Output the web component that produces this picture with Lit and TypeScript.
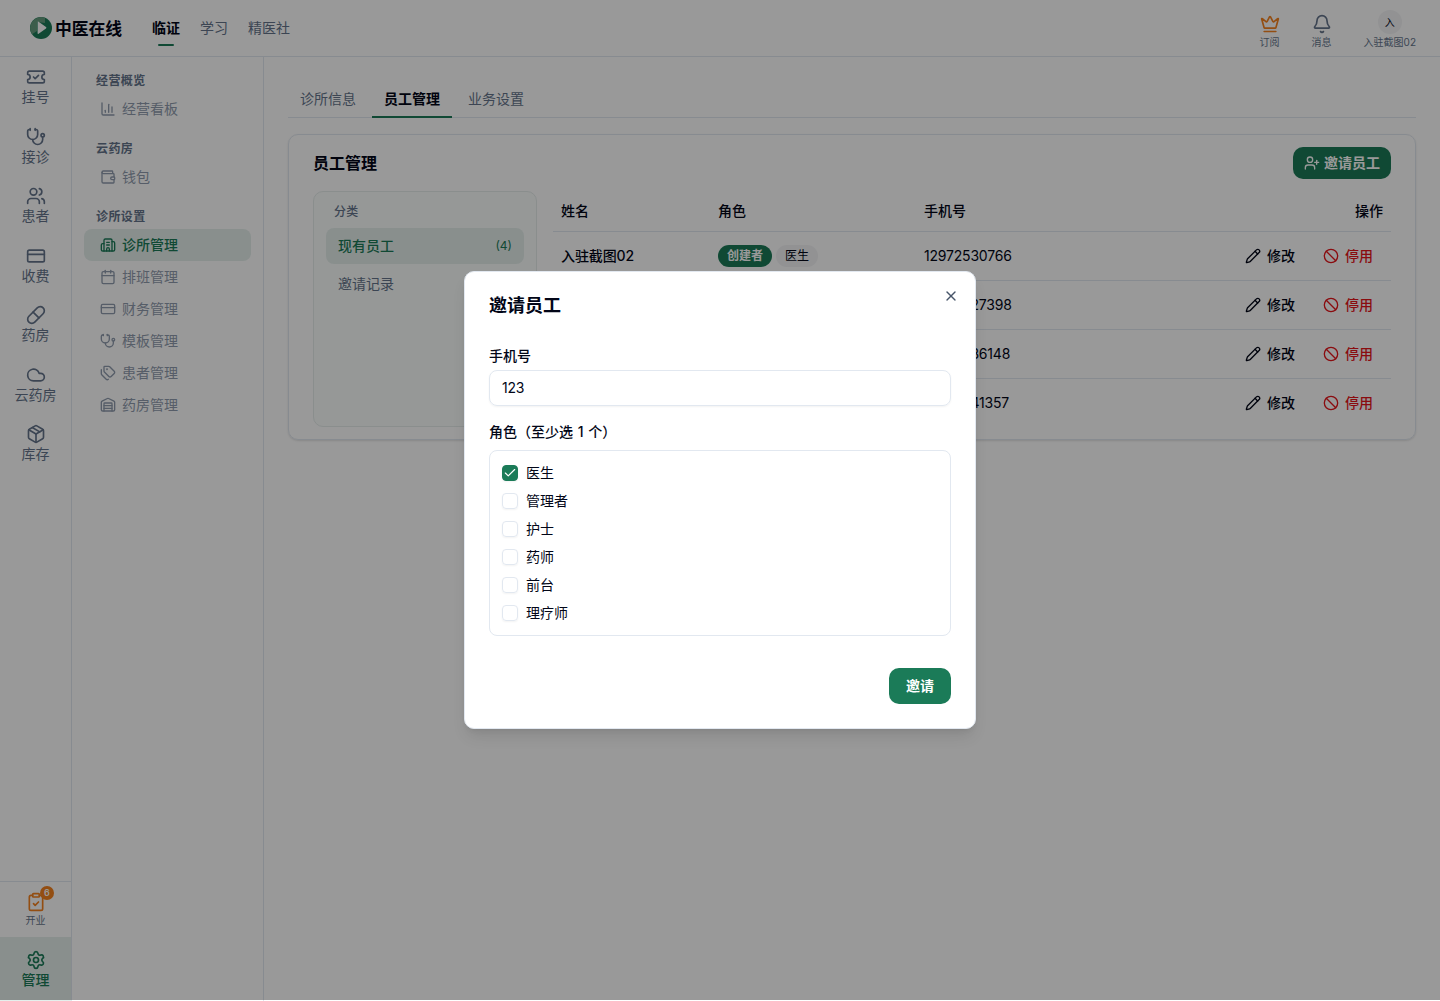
import { LitElement, html, css, svg } from "lit";
import { customElement, property } from "lit/decorators.js";
import { classMap } from "lit/directives/class-map.js";

const ICONS: Record<string, unknown> = {
  ticket: svg`<path d="M2 9a3 3 0 1 1 0 6v2a2 2 0 0 0 2 2h16a2 2 0 0 0 2-2v-2a3 3 0 1 1 0-6V7a2 2 0 0 0-2-2H4a2 2 0 0 0-2 2Z"/><path d="m9 12 2 2 4-4"/>`,
  stethoscope: svg`<path d="M11 2v2"/><path d="M5 2v2"/><path d="M5 3H4a2 2 0 0 0-2 2v4a6 6 0 0 0 12 0V5a2 2 0 0 0-2-2h-1"/><path d="M8 15a6 6 0 0 0 12 0v-3"/><circle cx="20" cy="10" r="2"/>`,
  users: svg`<path d="M16 21v-2a4 4 0 0 0-4-4H6a4 4 0 0 0-4 4v2"/><circle cx="9" cy="7" r="4"/><path d="M22 21v-2a4 4 0 0 0-3-3.87"/><path d="M16 3.13a4 4 0 0 1 0 7.75"/>`,
  card: svg`<rect width="20" height="14" x="2" y="5" rx="2"/><path d="M2 10h20"/>`,
  pill: svg`<path d="m10.5 20.5 10-10a4.95 4.95 0 1 0-7-7l-10 10a4.95 4.95 0 1 0 7 7Z"/><path d="m8.5 8.5 7 7"/>`,
  cloud: svg`<path d="M17.5 19H9a7 7 0 1 1 6.71-9h1.79a4.5 4.5 0 1 1 0 9Z"/>`,
  box: svg`<path d="M11 21.73a2 2 0 0 0 2 0l7-4A2 2 0 0 0 21 16V8a2 2 0 0 0-1-1.73l-7-4a2 2 0 0 0-2 0l-7 4A2 2 0 0 0 3 8v8a2 2 0 0 0 1 1.73z"/><path d="M12 22V12"/><path d="m3.3 7 8.7 5 8.7-5"/><path d="m7.5 4.27 9 5.15"/>`,
  clipboard: svg`<rect width="8" height="4" x="8" y="2" rx="1"/><path d="M16 4h2a2 2 0 0 1 2 2v14a2 2 0 0 1-2 2H6a2 2 0 0 1-2-2V6a2 2 0 0 1 2-2h2"/><path d="m9 14 2 2 4-4"/>`,
  settings: svg`<path d="M9.671 4.136a2.34 2.34 0 0 1 4.659 0 2.34 2.34 0 0 0 3.319 1.915 2.34 2.34 0 0 1 2.33 4.033 2.34 2.34 0 0 0 0 3.831 2.34 2.34 0 0 1-2.33 4.033 2.34 2.34 0 0 0-3.319 1.915 2.34 2.34 0 0 1-4.659 0 2.34 2.34 0 0 0-3.32-1.915 2.34 2.34 0 0 1-2.33-4.033 2.34 2.34 0 0 0 0-3.831A2.34 2.34 0 0 1 6.35 6.051a2.34 2.34 0 0 0 3.319-1.915"/><circle cx="12" cy="12" r="3"/>`,
  chart: svg`<path d="M3 3v16a2 2 0 0 0 2 2h16"/><path d="M18 17V9"/><path d="M13 17V5"/><path d="M8 17v-3"/>`,
  wallet: svg`<path d="M19 7V4a1 1 0 0 0-1-1H5a2 2 0 0 0 0 4h15a1 1 0 0 1 1 1v4h-3a2 2 0 0 0 0 4h3a1 1 0 0 0 1-1v-2a1 1 0 0 0-1-1"/><path d="M3 5v14a2 2 0 0 0 2 2h15a1 1 0 0 0 1-1v-4"/>`,
  building: svg`<path d="M10 12h4"/><path d="M10 8h4"/><path d="M14 21v-3a2 2 0 0 0-4 0v3"/><path d="M6 10H4a2 2 0 0 0-2 2v7a2 2 0 0 0 2 2h16a2 2 0 0 0 2-2V9a2 2 0 0 0-2-2h-2"/><path d="M6 21V5a2 2 0 0 1 2-2h8a2 2 0 0 1 2 2v16"/>`,
  calendar: svg`<path d="M8 2v4"/><path d="M16 2v4"/><rect width="18" height="18" x="3" y="4" rx="2"/><path d="M3 10h18"/>`,
  tags: svg`<path d="M13.172 2a2 2 0 0 1 1.414.586l6.71 6.71a2.4 2.4 0 0 1 0 3.408l-4.592 4.592a2.4 2.4 0 0 1-3.408 0l-6.71-6.71A2 2 0 0 1 6 9.172V3a1 1 0 0 1 1-1z"/><path d="M2 7v6.172a2 2 0 0 0 .586 1.414l6.71 6.71a2.4 2.4 0 0 0 3.191.193"/><circle cx="10.5" cy="6.5" r=".5" fill="currentColor"/>`,
  warehouse: svg`<path d="M18 21V10a1 1 0 0 0-1-1H7a1 1 0 0 0-1 1v11"/><path d="M22 19a2 2 0 0 1-2 2H4a2 2 0 0 1-2-2V8a2 2 0 0 1 1.132-1.803l7.95-3.974a2 2 0 0 1 1.837 0l7.948 3.974A2 2 0 0 1 22 8z"/><path d="M6 13h12"/><path d="M6 17h12"/>`,
  crown: svg`<path d="M11.562 3.266a.5.5 0 0 1 .876 0L15.39 8.87a1 1 0 0 0 1.516.294L21.183 5.5a.5.5 0 0 1 .798.519l-2.834 10.246a1 1 0 0 1-.956.734H5.81a1 1 0 0 1-.957-.734L2.02 6.02a.5.5 0 0 1 .798-.519l4.276 3.664a1 1 0 0 0 1.516-.294z"/><path d="M5 21h14"/>`,
  bell: svg`<path d="M10.268 21a2 2 0 0 0 3.464 0"/><path d="M3.262 15.326A1 1 0 0 0 4 17h16a1 1 0 0 0 .74-1.673C19.41 13.956 18 12.499 18 8A6 6 0 0 0 6 8c0 4.499-1.411 5.956-2.738 7.326"/>`,
  userPlus: svg`<path d="M16 21v-2a4 4 0 0 0-4-4H6a4 4 0 0 0-4 4v2"/><circle cx="9" cy="7" r="4"/><path d="M19 8v6"/><path d="M22 11h-6"/>`,
  pencil: svg`<path d="M21.174 6.812a1 1 0 0 0-3.986-3.987L3.842 16.174a2 2 0 0 0-.5.83l-1.321 4.352a.5.5 0 0 0 .623.622l4.353-1.32a2 2 0 0 0 .83-.497z"/><path d="m15 5 4 4"/>`,
  ban: svg`<circle cx="12" cy="12" r="10"/><path d="m4.9 4.9 14.2 14.2"/>`,
  close: svg`<path d="M18 6 6 18"/><path d="m6 6 12 12"/>`,
  check: svg`<path d="M20 6 9 17l-5-5"/>`,
};

@customElement("ui-icon")
class UiIcon extends LitElement {
  @property() name = "";
  static styles = css`
    :host { display: block; flex: none; width: 16px; height: 16px; }
    svg { display: block; width: 100%; height: 100%; }
  `;
  render() {
    return html`<svg viewBox="0 0 24 24" fill="none" stroke="currentColor" stroke-width="2" stroke-linecap="round" stroke-linejoin="round">${ICONS[this.name]}</svg>`;
  }
}

const RAIL = [
  ["ticket", "挂号"], ["stethoscope", "接诊"], ["users", "患者"], ["card", "收费"],
  ["pill", "药房"], ["cloud", "云药房"], ["box", "库存"],
];

const MENU: { title: string; items: string[][] }[] = [
  { title: "经营概览", items: [["chart", "经营看板"]] },
  { title: "云药房", items: [["wallet", "钱包"]] },
  {
    title: "诊所设置",
    items: [["building", "诊所管理"], ["calendar", "排班管理"], ["card", "财务管理"],
      ["stethoscope", "模板管理"], ["tags", "患者管理"], ["warehouse", "药房管理"]],
  },
];

const STAFF = [
  { name: "入驻截图02", owner: true, roles: ["医生"], phone: "12972530766" },
  { name: "", owner: false, roles: [], phone: "12972527398" },
  { name: "", owner: false, roles: [], phone: "12972536148" },
  { name: "", owner: false, roles: [], phone: "12972541357" },
];

const ROLES = ["医生", "管理者", "护士", "药师", "前台", "理疗师"];

@customElement("app-root")
class AppRoot extends LitElement {
  static styles = css`
    :host {
      --primary: #1b7b58; --accent: #e4efec; --border: #e2e8f0; --muted: #64748b; --ink: #020617;
      display: block; position: relative; height: 1001px; overflow: hidden; background: #fff; color: var(--ink);
      font: 400 14px/20px Inter, "Noto Sans CJK SC", sans-serif;
    }
    * { box-sizing: border-box; }
    .page { display: flex; flex-direction: column; height: 100%; }
    .header { display: flex; align-items: center; height: 57px; padding: 0 24px 0 30px; border-bottom: 1px solid var(--border); }
    .logo { display: block; width: 22px; height: 22px; }
    .brand { margin-left: 3px; width: 97px; padding-top: 1px; font-size: 16.8px; font-weight: 600; white-space: nowrap; }
    .nav { display: flex; gap: 20px; color: var(--muted); }
    .nav-item { display: flex; flex-direction: column; align-items: center; height: 36px; padding-top: 8px; }
    .nav-item.on { color: var(--ink); font-weight: 600; }
    .nav-item.on::after { content: ""; width: 16px; height: 2px; margin-top: 6px; border-radius: 1px; background: var(--primary); }
    .tools { display: flex; margin-left: auto; gap: 32px; color: var(--muted); font-size: 10px; line-height: 12px; }
    .tool { display: flex; flex-direction: column; align-items: center; height: 39px; justify-content: flex-end; }
    .tool ui-icon { width: 20px; height: 20px; margin-bottom: 2px; }
    .tool.gold ui-icon { color: #f5821f; }
    .avatar { display: grid; place-items: center; width: 24px; height: 24px; border-radius: 50%; background: #f3f4f6; color: var(--ink); margin-bottom: 2px; }
    .body { display: flex; flex: 1; min-height: 0; }
    .rail { display: flex; flex-direction: column; width: 72px; border-right: 1px solid var(--border); color: var(--muted); }
    .rail-item { display: flex; flex-direction: column; align-items: center; height: 59.5px; padding-top: 10px; }
    .rail-item ui-icon, .manage ui-icon, .opening ui-icon { width: 20px; height: 20px; }
    .opening { position: relative; display: flex; flex-direction: column; align-items: center; margin-top: auto; height: 56px; padding-top: 10px; border-top: 1px solid var(--border); font-size: 10px; line-height: 16px; }
    .opening ui-icon { color: #f5821f; }
    .count { position: absolute; left: 40px; top: 4px; display: grid; place-items: center; width: 14px; height: 14px; border-radius: 50%; background: #f5821f; color: #fff; font-size: 9px; font-weight: 600; line-height: 14px; }
    .manage { display: flex; flex-direction: column; align-items: center; height: 64px; padding-top: 13px; background: var(--accent); color: var(--primary); font-weight: 500; }
    .side { width: 192px; padding: 10px 12px; border-right: 1px solid var(--border); }
    .group { margin-bottom: 10px; }
    .group-title { height: 26px; padding: 4px 12px; font-size: 12px; font-weight: 600; letter-spacing: .4px; color: var(--muted); }
    .side-item { display: flex; align-items: center; gap: 6px; height: 32px; padding-left: 16px; border-radius: 8px; color: #8f9bad; }
    .side-item.on { background: var(--accent); color: var(--primary); font-weight: 500; }
    .main { flex: 1; padding: 24px; }
    .tabs { display: flex; gap: 4px; height: 37px; border-bottom: 1px solid var(--border); color: var(--muted); }
    .tab { width: 80px; height: 37px; padding-top: 8px; text-align: center; }
    .tab.on { color: var(--ink); font-weight: 600; border-bottom: 2px solid var(--primary); }
    .card { margin-top: 16px; height: 306px; padding: 12px 24px; border: 1px solid var(--border); border-radius: 10px; box-shadow: 0 1px 2px rgba(0,0,0,.12); }
    .card-head { display: flex; align-items: center; justify-content: space-between; height: 32px; }
    .card-title { font-size: 16px; font-weight: 600; }
    .invite { display: flex; align-items: center; gap: 4px; height: 32px; padding: 0 11px; border-radius: 10px; background: var(--primary); color: #fff; font-weight: 600; }
    .card-body { display: flex; gap: 16px; margin-top: 12px; }
    .filter { width: 224px; height: 236px; padding: 8px 12px; border: 1px solid #e6edec; border-radius: 10px; background: #fbfdfc; color: var(--muted); }
    .filter-title { height: 28px; padding: 2px 8px; font-size: 12px; font-weight: 500; letter-spacing: .3px; }
    .filter-item { display: flex; align-items: center; justify-content: space-between; height: 36px; margin-bottom: 2px; padding: 0 12px; border-radius: 8px; }
    .filter-item.on { background: var(--accent); color: var(--primary); font-weight: 500; }
    .filter-num { font-size: 12px; font-weight: 400; }
    .table { flex: 1; }
    .row { display: grid; grid-template-columns: 157px 206px 1fr auto; align-items: center; height: 49px; padding: 0 8px; border-bottom: 1px solid var(--border); }
    .row.head { height: 41px; font-weight: 500; }
    .row:last-child { border-bottom: 0; height: 48px; }
    .name { font-weight: 500; letter-spacing: -.1px; }
    .phone { letter-spacing: -.2px; }
    .badges { display: flex; gap: 4px; font-size: 12px; }
    .badge { height: 22px; padding: 1px 9px; border-radius: 11px; background: #f3f4f6; }
    .badge.owner { background: var(--primary); color: #fff; font-weight: 600; }
    .acts { display: flex; gap: 8px; font-weight: 500; }
    .act { display: flex; align-items: center; gap: 6px; padding: 0 10px; }
    .act.stop { color: #e7141a; }
    .overlay { position: absolute; inset: 0 0 1px 0; display: grid; place-items: center; background: rgba(0,0,0,.4); }
    .dialog { position: relative; display: flex; flex-direction: column; width: 512px; height: 458px; padding: 24px; border: 1px solid var(--border); border-radius: 10px; background: #fff; box-shadow: 0 10px 15px -3px rgba(0,0,0,.1), 0 4px 6px -4px rgba(0,0,0,.1); }
    .close { position: absolute; right: 16px; top: 16px; color: #475569; }
    .dialog-title { padding-top: 1px; font-size: 18px; line-height: 18px; font-weight: 600; }
    .label { font-weight: 500; }
    .label.phone-label { margin-top: 31px; }
    .label.role-label { margin-top: 16px; word-spacing: 1px; }
    .input { height: 36px; margin-top: 4px; padding: 7px 12px; border: 1px solid var(--border); border-radius: 8px; box-shadow: 0 1px 2px rgba(0,0,0,.05); letter-spacing: -.2px; }
    .roles { display: flex; flex-direction: column; gap: 8px; height: 186px; margin-top: 8px; padding: 12px; border: 1px solid var(--border); border-radius: 8px; }
    .role { display: flex; align-items: center; gap: 8px; }
    .tick { display: grid; place-items: center; width: 16px; height: 16px; border: 1px solid var(--border); border-radius: 4px; box-shadow: 0 1px 2px rgba(0,0,0,.05); color: #fff; }
    .tick.on { border-color: var(--primary); background: var(--primary); }
    .tick ui-icon { width: 14px; height: 14px; }
    .submit { align-self: flex-end; width: 62px; height: 36px; margin-top: 32px; border-radius: 10px; background: var(--primary); color: #fff; font-weight: 600; line-height: 36px; text-align: center; }
  `;

  render() {
    return html`
      <div class="page">
        <header class="header">
          <svg class="logo" viewBox="0 0 22 22">
            <circle cx="11" cy="11" r="11" fill="#1b7b58" />
            <path d="M15 .8A11 11 0 0 0 2 17.3L7 14V5l8 1Z" fill="#649b7e" />
            <path d="M7.6 5.4q0-1.2 1-.6l7.4 5.3q.9.7 0 1.5l-7.4 5.2q-1 .6-1-.6Z" fill="#fff" />
          </svg>
          <div class="brand">中医在线</div>
          <nav class="nav">
            <div class="nav-item on">临证</div><div class="nav-item">学习</div><div class="nav-item">精医社</div>
          </nav>
          <div class="tools">
            <div class="tool gold"><ui-icon name="crown"></ui-icon>订阅</div>
            <div class="tool"><ui-icon name="bell"></ui-icon>消息</div>
            <div class="tool"><div class="avatar">入</div>入驻截图02</div>
          </div>
        </header>
        <div class="body">
          <aside class="rail">
            ${RAIL.map(([i, t]) => html`<div class="rail-item"><ui-icon name=${i}></ui-icon>${t}</div>`)}
            <div class="opening"><ui-icon name="clipboard"></ui-icon><span class="count">6</span>开业</div>
            <div class="manage"><ui-icon name="settings"></ui-icon>管理</div>
          </aside>
          <aside class="side">
            ${MENU.map((g) => html`<div class="group"><div class="group-title">${g.title}</div>
              ${g.items.map(([i, t]) => html`<div class=${classMap({ "side-item": true, on: t === "诊所管理" })}><ui-icon name=${i}></ui-icon>${t}</div>`)}
            </div>`)}
          </aside>
          <main class="main">
            <div class="tabs"><div class="tab">诊所信息</div><div class="tab on">员工管理</div><div class="tab">业务设置</div></div>
            <section class="card">
              <div class="card-head"><div class="card-title">员工管理</div><div class="invite"><ui-icon name="userPlus"></ui-icon>邀请员工</div></div>
              <div class="card-body">
                <div class="filter">
                  <div class="filter-title">分类</div>
                  <div class="filter-item on">现有员工<span class="filter-num">(4)</span></div>
                  <div class="filter-item">邀请记录</div>
                </div>
                <div class="table">
                  <div class="row head"><span>姓名</span><span>角色</span><span>手机号</span><span>操作</span></div>
                  ${STAFF.map((s) => html`<div class="row">
                    <span class="name">${s.name}</span>
                    <span class="badges">${s.owner ? html`<span class="badge owner">创建者</span>` : ""}${s.roles.map((r) => html`<span class="badge">${r}</span>`)}</span>
                    <span class="phone">${s.phone}</span>
                    <span class="acts"><span class="act"><ui-icon name="pencil"></ui-icon>修改</span><span class="act stop"><ui-icon name="ban"></ui-icon>停用</span></span>
                  </div>`)}
                </div>
              </div>
            </section>
          </main>
        </div>
      </div>
      <div class="overlay">
        <div class="dialog">
          <ui-icon class="close" name="close"></ui-icon>
          <div class="dialog-title">邀请员工</div>
          <div class="label phone-label">手机号</div>
          <div class="input">123</div>
          <div class="label role-label">角色（至少选 1 个）</div>
          <div class="roles">
            ${ROLES.map((r, i) => html`<div class="role"><span class=${classMap({ tick: true, on: i === 0 })}>${i === 0 ? html`<ui-icon name="check"></ui-icon>` : ""}</span>${r}</div>`)}
          </div>
          <div class="submit">邀请</div>
        </div>
      </div>
    `;
  }
}
